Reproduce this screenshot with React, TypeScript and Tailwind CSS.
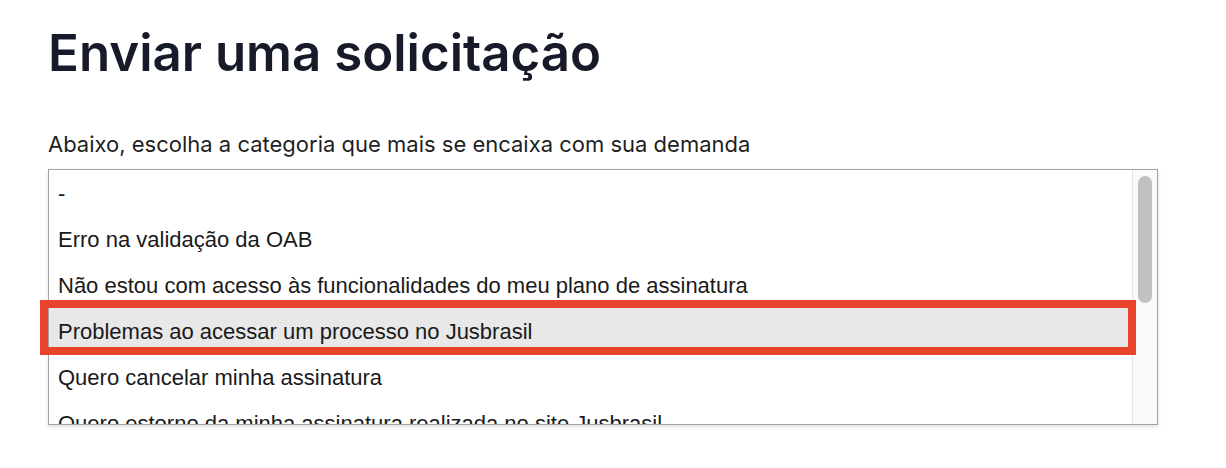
import React from "react";

const options = [
  "-",
  "Erro na validação da OAB",
  "Não estou com acesso às funcionalidades do meu plano de assinatura",
  "Problemas ao acessar um processo no Jusbrasil",
  "Quero cancelar minha assinatura",
  "Quero estorno da minha assinatura realizada no site Jusbrasil",
];

export default function App() {
  const selected = 3;

  return (
    <div className="relative h-[468px] w-[1226px] bg-white px-12 pt-[18px] font-['Inter',sans-serif]">
      <h1 className="text-[51px] font-semibold leading-[70px] text-[#171a28]">
        Enviar uma solicitação
      </h1>

      <p className="mt-[42px] text-[22px] leading-[28px] text-[#1f1f1f]">
        Abaixo, escolha a categoria que mais se encaixa com sua demanda
      </p>

      <div className="mt-[11px] flex h-[256px] w-[1110px] border border-[#a3a3a3] bg-white shadow-[0_2px_4px_rgba(0,0,0,0.12)]">
        <ul className="flex-1 overflow-hidden font-['Liberation_Sans',Arial,sans-serif] text-[22px] text-[#1a1a1a]">
          {options.map((opt, index) => (
            <li
              key={index}
              className={`flex h-[46px] shrink-0 items-center whitespace-nowrap px-[9px] ${index === selected ? "bg-[#e8e8e8]" : ""}`}
            >
              {opt}
            </li>
          ))}
        </ul>
        <div className="w-[25px] shrink-0 border-l border-[#e4e4e4] bg-[#fafafa] px-[5px] pt-[6px]">
          <div className="h-[127px] w-[14px] rounded-full bg-[#c1c1c1]" />
        </div>
      </div>

      {/* red annotation box */}
      <div className="absolute left-[40px] top-[300px] h-[55px] w-[1096px] border-[8px] border-[#e8432b]" />
    </div>
  );
}
